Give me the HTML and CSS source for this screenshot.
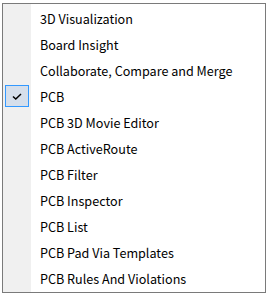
FILE: index.html
```html
<!DOCTYPE html>
<html lang="en">
<head>
    <meta charset="UTF-8">
    <title>Panels menu</title>
    <link rel="stylesheet" href="styles.css">
</head>
<body>

<div class="menu">
    <div class="item"><span class="gutter"></span><span class="label">3D Visualization</span></div>
    <div class="item"><span class="gutter"></span><span class="label">Board Insight</span></div>
    <div class="item"><span class="gutter"></span><span class="label">Collaborate, Compare and Merge</span></div>
    <div class="item"><span class="gutter"><span class="check">
        <svg width="10" height="7" viewBox="0 0 10 7"><path d="M1 3.5 L3.8 6 L9 1" fill="none" stroke="#000" stroke-width="1.5"/></svg>
    </span></span><span class="label">PCB</span></div>
    <div class="item"><span class="gutter"></span><span class="label">PCB 3D Movie Editor</span></div>
    <div class="item"><span class="gutter"></span><span class="label">PCB ActiveRoute</span></div>
    <div class="item"><span class="gutter"></span><span class="label">PCB Filter</span></div>
    <div class="item"><span class="gutter"></span><span class="label">PCB Inspector</span></div>
    <div class="item"><span class="gutter"></span><span class="label">PCB List</span></div>
    <div class="item"><span class="gutter"></span><span class="label">PCB Pad Via Templates</span></div>
    <div class="item"><span class="gutter"></span><span class="label">PCB Rules And Violations</span></div>
</div>

</body>
</html>
```

FILE: styles.css
```css
body {
    margin: 0;
    padding: 3px 0 0 2px;
    background-color: #fff;
    font-family: "Noto Sans CJK SC", "Noto Sans", sans-serif;
    font-size: 12.6px;
    color: #000;
}
.menu {
    width: 262px;
    padding: 1px 0;
    border: 1px solid #7a7a7a;
    background: linear-gradient(to right, #f0f0f0 28px, #fff 28px);
}
.item {
    display: flex;
    align-items: center;
    height: 26px;
}
.gutter {
    width: 28px;
    height: 26px;
    display: flex;
    align-items: center;
}
.check {
    box-sizing: border-box;
    width: 24px;
    height: 22px;
    margin-left: 2px;
    border: 1px solid #3399ff;
    background-color: #d6dfeb;
    display: flex;
    align-items: center;
    justify-content: center;
}
.label {
    padding-left: 9px;
    white-space: nowrap;
}
```
